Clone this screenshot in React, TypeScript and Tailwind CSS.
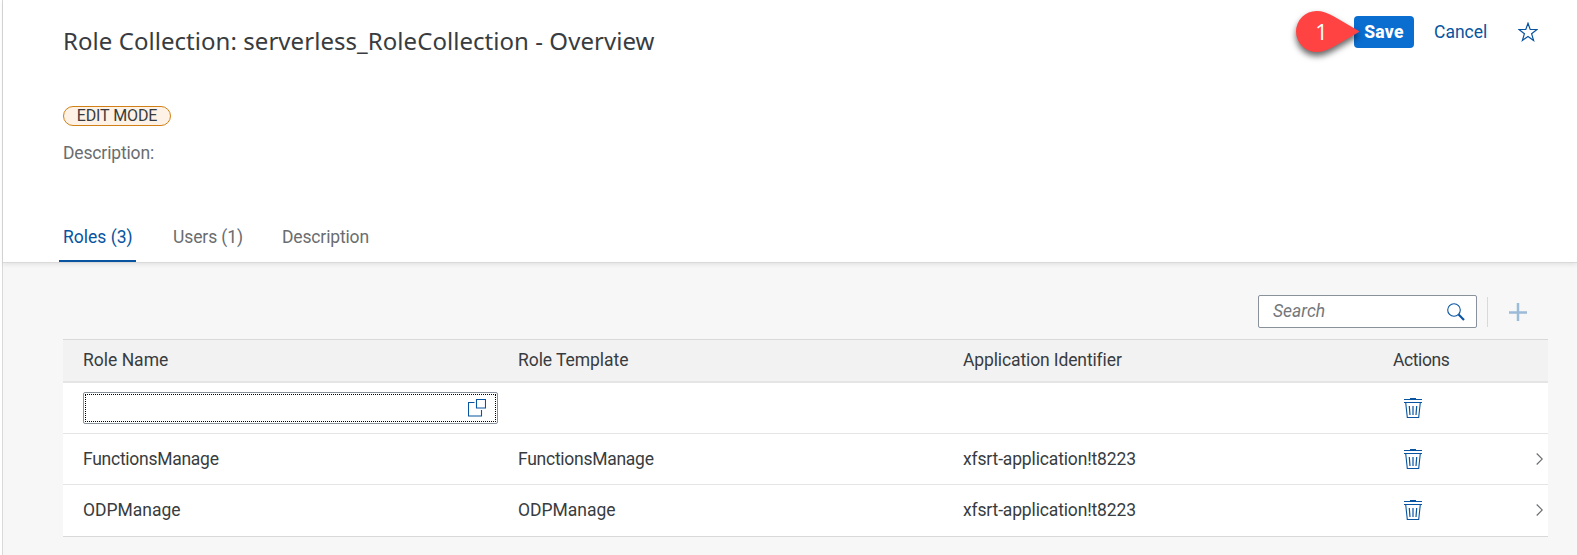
import type { ReactNode } from "react";

function StarIcon() {
  return (
    <svg className="block h-5 w-5" viewBox="0 0 20 20" fill="none" stroke="#0854a0" strokeWidth="1.2">
      <path d="M10 1.2 12.2 7.5H19L13.6 11.700 15.6 18.4 10 14.4 4.4 18.4 6.4 11.700 1 7.5H7.8Z" />
    </svg>
  );
}

function SearchIcon() {
  return (
    <svg className="block h-[18px] w-[18px]" viewBox="0 0 18 18" fill="none" stroke="#0854a0">
      <circle cx="7" cy="7" r="6.3" strokeWidth="1.1" />
      <path d="M11.6 11.6 17 17" strokeWidth="2.1" />
    </svg>
  );
}

function ValueHelpIcon() {
  return (
    <svg className="block h-[18px] w-[18px]" viewBox="0 0 18 18" fill="none" stroke="#0854a0" strokeWidth="1.1">
      <path d="M8.5.5h9v8.5h-9z" />
      <path d="M6.5 3.5h-6v13.500h13V11" />
    </svg>
  );
}

function TrashIcon() {
  return (
    <svg className="block h-5 w-[18px]" viewBox="0 0 18 20" fill="none" stroke="#0854a0">
      <path d="M6 .5h6M0 1.500h18M0 4.500h18" strokeWidth="1" />
      <path d="M1.700 4.500 3.300 19.500H14.700L16.300 4.500" strokeWidth="1.1" />
      <path d="M5.300 8 6 17M9 8V17M12.700 8 12 17" strokeWidth="1.200" />
    </svg>
  );
}

function Chevron() {
  return (
    <svg className="block h-3 w-[7px]" viewBox="0 0 7 12" fill="none" stroke="#6a6d70" strokeWidth="1.1">
      <path d="M.700.500 6.300 6 .700 11.500" />
    </svg>
  );
}

function Marker() {
  return (
    <div className="absolute top-[11px] left-[1296px] h-[42px] w-[64px]">
      <svg className="block h-full w-full overflow-visible drop-shadow-[0_4px_3px_rgba(0,0,0,0.6)]" viewBox="0 0 64 42">
        <path
          d="M20.500 0C26.500 0 32 2 38 5.500L62 19.500Q64 20.500 62 21.500L38 35.500C32 39 26.500 41 20.500 41A20.500 20.500 0 0 1 20.500 0Z"
          fill="#ff4343"
        />
      </svg>
      <span className="absolute top-0 left-0 w-[51px] text-center text-[22px] leading-[41px] text-white font-['Open_Sans',sans-serif]">
        1
      </span>
    </div>
  );
}

type RowProps = { name?: string; field?: ReactNode; app?: string; nav?: boolean; last?: boolean; tight?: boolean };

function Row({ name, field, app, nav, last, tight }: RowProps) {
  const tracking = tight ? "tracking-[-0.27px]" : "tracking-normal";
  return (
    <div
      className={
        last
          ? "flex h-[52px] items-center border-b border-[#d9d9d9] bg-white pb-px pl-5"
          : "flex h-[51px] items-center border-b border-[#e5e5e5] bg-white pl-5"
      }
    >
      <div className="w-[435px]">{field ?? <span className={tracking}>{name}</span>}</div>
      <div className="w-[445px]">
        <span className={tracking}>{name}</span>
      </div>
      <div className="w-[441px] tracking-[-0.15px]">{app}</div>
      <div className="flex grow items-center justify-between pr-[5px]">
        <TrashIcon />
        {nav && <Chevron />}
      </div>
    </div>
  );
}

export default function App() {
  return (
    <div className="relative flex h-[555px] w-full flex-col overflow-hidden bg-white pl-[2px] text-[17.5px] leading-6 text-[#383c40] font-['Roboto',sans-serif]">
      <div className="flex grow flex-col border-l border-[#d9d9d9] bg-[#f7f7f7]">
        <header className="flex h-[263px] flex-col border-b border-[#d9d9d9] bg-white pl-[60px] shadow-[0_2px_4px_rgba(0,0,0,0.08)]">
          <div className="flex h-16 items-start justify-between pr-[39px]">
            <h1 className="pt-[25px] text-2xl leading-8 tracking-[0.05px] font-['Noto_Sans',sans-serif]">
              Role Collection: serverless_RoleCollection - Overview
            </h1>
            <div className="flex items-center pt-4">
              <button className="h-8 w-[60px] rounded bg-[#0a6ed1] text-[17.5px] font-extrabold tracking-[0.3px] text-white">
                Save
              </button>
              <button className="ml-5 w-[54px] text-left text-[17.5px] text-[#0854a0]">Cancel</button>
              <div className="ml-[30px]">
                <StarIcon />
              </div>
            </div>
          </div>
          <div className="mt-[42px] flex h-5 w-[108px] items-center justify-center rounded-full border border-[#d08014] bg-[#fef2e6] text-base leading-none tracking-[-0.1px]">
            EDIT MODE
          </div>
          <p className="mt-[15px] tracking-[-0.15px] text-[#6a6d70]">Description:</p>
          <nav className="mt-auto flex h-[46px] text-[#6a6d70]">
            <div className="-ml-[4px] w-[77px] rounded-t-[1px] pt-[9px] pl-[4px] text-[#0854a0] shadow-[inset_0_-2px_0_#0854a0]">
              Roles (3)
            </div>
            <div className="ml-[37px] w-[109px] pt-[9px] tracking-[-0.1px]">Users (1)</div>
            <div className="pt-[9px] tracking-[-0.15px]">Description</div>
          </nav>
        </header>

        <main className="flex flex-col pr-[29px] pl-[60px]">
          <div className="flex h-[76px] items-start justify-end pt-8 pr-[21px]">
            <div className="flex h-[33px] w-[219px] items-center justify-between rounded-[2px] border border-[#89919a] bg-white pr-[11px] pl-[14px]">
              <span className="pb-[2px] text-[#74777a] italic">Search</span>
              <div className="pt-px">
                <SearchIcon />
              </div>
            </div>
            <div className="mt-[2px] ml-[10px] h-[30px] w-px bg-[#d9d9d9]" />
            <svg className="mt-2 ml-[21px] block h-[18px] w-[18px]" viewBox="0 0 18 18" stroke="#9cbbd9" strokeWidth="2.500">
              <path d="M9 0V18M0 9.500H18" />
            </svg>
          </div>

          <div className="flex h-11 items-center border-t border-b-2 border-t-[#d9d9d9] border-b-[#e5e5e5] bg-[#f2f2f2] pb-[2px] pl-5">
            <div className="w-[435px]">Role Name</div>
            <div className="w-[445px] tracking-[-0.06px]">Role Template</div>
            <div className="w-[430px] tracking-[-0.12px]">Application Identifier</div>
            <div className="tracking-[-0.4px]">Actions</div>
          </div>
          <Row
            field={
              <div className="h-8 w-[415px] rounded-[2px] border border-[#89919a] p-px">
                <div className="flex h-full items-center justify-end border border-dotted border-black pr-[9px]">
                  <ValueHelpIcon />
                </div>
              </div>
            }
          />
          <Row name="FunctionsManage" app="xfsrt-application!t8223" nav tight />
          <Row name="ODPManage" app="xfsrt-application!t8223" nav last />
        </main>
      </div>
      <Marker />
    </div>
  );
}
